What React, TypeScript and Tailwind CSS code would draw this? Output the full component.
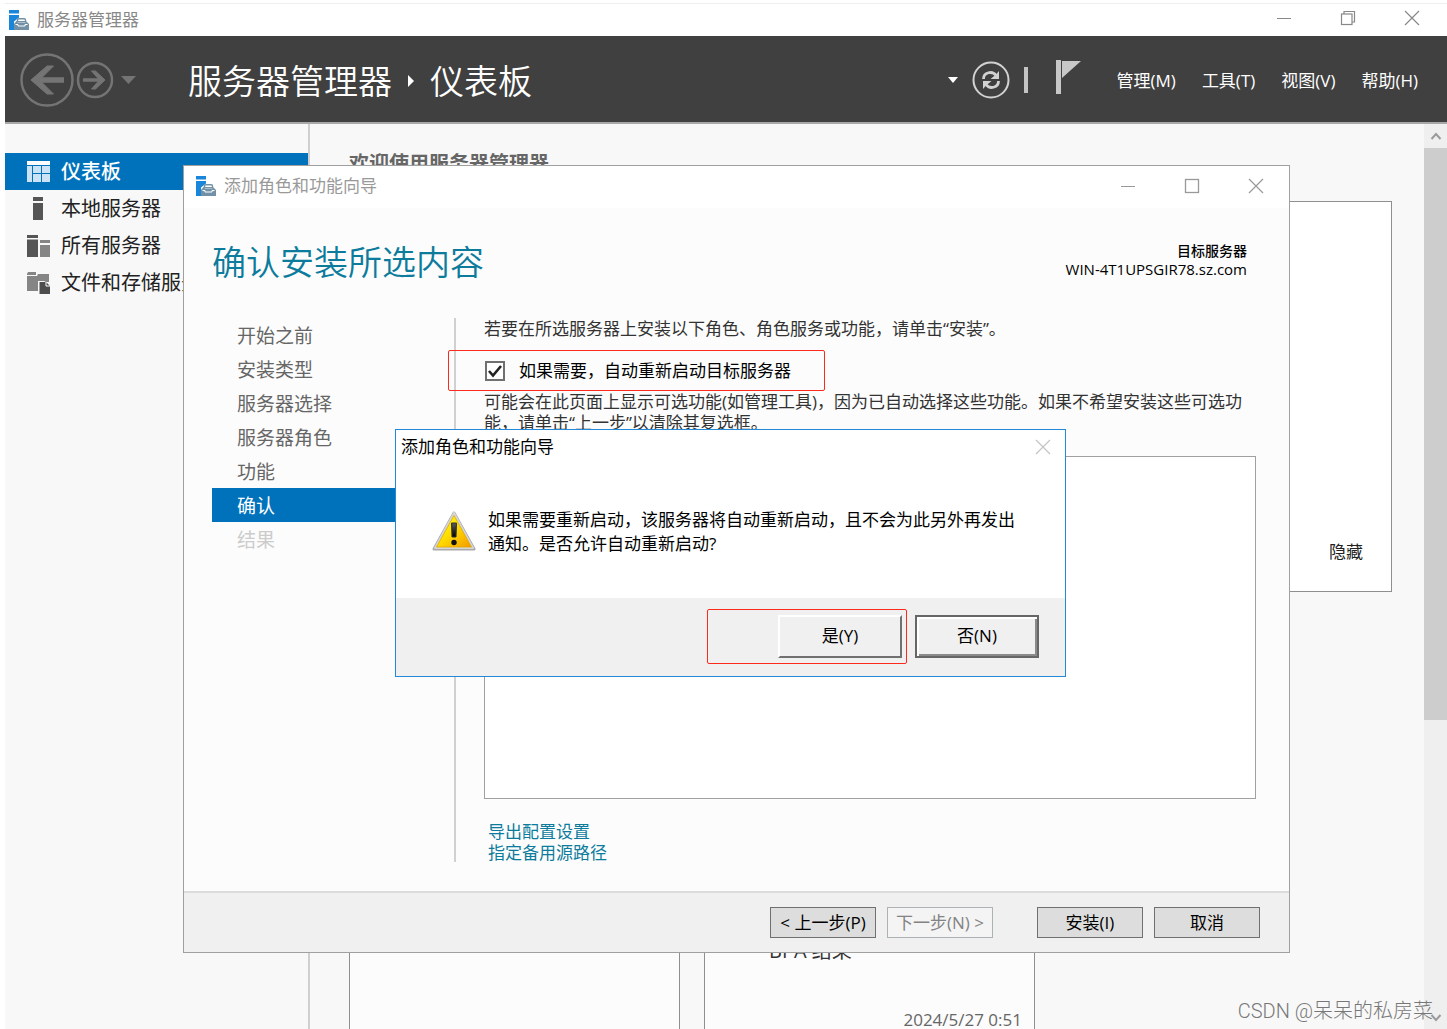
import React from 'react';

const navItems = ['仪表板', '本地服务器', '所有服务器', '文件和存储服务'];

const steps = ['开始之前', '安装类型', '服务器选择', '服务器角色', '功能', '确认', '结果'];

const menus = ['管理(M)', '工具(T)', '视图(V)', '帮助(H)'];

const AppIcon = () => (
  <svg className="h-5 w-5 shrink-0" viewBox="0 0 20 20">
    <path d="M0 0h10v3.500H0zM0 5h10v2.500L5 11.500V20H0z" fill="#1a86d9" />
    <path d="M5 20v-6l2.500-3H17l3 3v6z" fill="#7391a6" />
    <path d="M8.500 11.500V10q0-1.300 1.300-1.300h5.400q1.300 0 1.300 1.300v1.500" fill="none" stroke="#7391a6" strokeWidth="1.400" />
    <path d="M6.500 14.500h2.500v1.500h7v-1.500h2.500" stroke="#fff" strokeWidth="1" fill="none" />
    <path d="M8.500 12.500h8" stroke="#b9c8d3" strokeWidth="0.800" />
  </svg>
);

const MinimizeIcon = () => (
  <svg className="h-4 w-4" viewBox="0 0 16 16" stroke="currentColor" fill="none">
    <path d="M1 8.500h14" />
  </svg>
);

const MaximizeIcon = () => (
  <svg className="h-4 w-4" viewBox="0 0 16 16" stroke="currentColor" strokeWidth="1.300" fill="none">
    <rect x="1.500" y="1.500" width="13" height="13" />
  </svg>
);

const RestoreIcon = () => (
  <svg className="h-4 w-4" viewBox="0 0 16 16" stroke="currentColor" strokeWidth="1.200" fill="none">
    <rect x="1.500" y="4" width="10.500" height="10.500" />
    <path d="M4 4V1.500h10.500V12H12" />
  </svg>
);

const CloseIcon = () => (
  <svg className="h-4 w-4" viewBox="0 0 16 16" stroke="currentColor" strokeWidth="1.200" fill="none">
    <path d="M1 1l14 14M15 1L1 15" />
  </svg>
);

const NavIcon = ({ index }: { index: number }) => (
  <svg className="h-6 w-6 shrink-0" viewBox="0 0 24 24">
    {index === 0 && (
      <>
        <path d="M0 1h23v4H0z" fill="#fff" />
        <path d="M0 6h5v16H0zM6 6h8v7H6zM15 6h8v7h-8zM6 14h8v8H6zM15 14h8v8h-8z" fill="#cce3f5" />
      </>
    )}
    {index === 1 && <path d="M6 0h10v4H6zM6 6h10v17H6z" fill="#555" />}
    {index === 2 && (
      <>
        <path d="M0 1h11v3H0zM0 5.500h11V23H0z" fill="#555" />
        <path d="M13 6h10v3H13zM13 11h10v12H13z" fill="#858585" />
      </>
    )}
    {index === 3 && (
      <>
        <path d="M0 3l1-2h8v3H0zM0 5h10l1-2h11v8h-3l-2-1h-6v10H0z" fill="#858585" />
        <path d="M12.500 11h6.500l4 4v8H12.500z" fill="#4d4d4d" />
        <path d="M19 11v4h4" stroke="#fff" fill="none" />
      </>
    )}
  </svg>
);

const WarningIcon = () => (
  <svg className="h-[42px] w-11 shrink-0" viewBox="0 0 44 42">
    <defs>
      <linearGradient id="warnFill" x1="0" y1="0" x2="1" y2="1">
        <stop offset="0" stopColor="#ffff20" />
        <stop offset="0.45" stopColor="#ffe000" />
        <stop offset="1" stopColor="#f39a00" />
      </linearGradient>
      <linearGradient id="warnBar" x1="0" y1="0" x2="0" y2="1">
        <stop offset="0" stopColor="#5a5a5a" />
        <stop offset="1" stopColor="#000" />
      </linearGradient>
    </defs>
    <path d="M22 3L42 39H2z" fill="#a9a9a9" stroke="#a9a9a9" strokeWidth="3" strokeLinejoin="round" />
    <path d="M22 3L41 38H3z" fill="#dcdcdc" stroke="#d6d6d6" strokeWidth="2" strokeLinejoin="round" />
    <path d="M22 5.500L39.500 37h-35z" fill="url(#warnFill)" stroke="#e2a700" strokeWidth="0.800" strokeLinejoin="round" />
    <path d="M19.500 13h5l-.5 14h-4z" fill="url(#warnBar)" stroke="#333" strokeLinejoin="round" />
    <circle cx="22" cy="32.500" r="2.700" fill="#111" />
  </svg>
);

const Header = () => (
  <header className="flex h-[88px] shrink-0 items-center border-b-2 border-[#a8a8a8] bg-[#404040] pl-[15px] pr-[29px] pt-0.5 text-white">
    <button aria-label="后退">
      <svg className="h-[54px] w-[54px]" viewBox="0 0 54 54" fill="none" stroke="#747474">
        <circle cx="27" cy="27" r="25.500" strokeWidth="2.500" />
        <path d="M44 27H14" strokeWidth="5.500" />
        <path d="M27 13h6.500L19.500 27l14 14H27L11 27z" fill="#747474" strokeWidth="1" />
      </svg>
    </button>
    <button aria-label="前进">
      <svg className="ml-0.5 h-[38px] w-[38px]" viewBox="0 0 38 38" fill="none" stroke="#747474">
        <circle cx="19" cy="19" r="17" strokeWidth="2.500" />
        <path d="M7 19h20" strokeWidth="3.500" />
        <path d="M15.500 10h4l9.500 9-9.500 9h-4l8-9z" fill="#747474" strokeWidth="1" />
      </svg>
    </button>
    <svg className="ml-1.5 h-2 w-4" viewBox="0 0 16 8">
      <path d="M1 0h15L8.500 8z" fill="#747474" />
    </svg>
    <h1 className="ml-[52px] flex items-center pt-0.5 text-[34px] font-[350] leading-10">
      服务器管理器
      <svg className="mx-[15px] h-3 w-2" viewBox="0 0 8 12">
        <path d="M1 0l6 6-6 6z" fill="#fff" />
      </svg>
      仪表板
    </h1>
    <div className="ml-auto flex items-center">
      <svg className="h-1.5 w-2.5" viewBox="0 0 10 6">
        <path d="M0 0h10L5 6z" fill="#fff" />
      </svg>
      <button aria-label="刷新" className="ml-3.5">
        <svg className="h-[38px] w-[38px]" viewBox="0 0 38 38" fill="none" stroke="#d2d2d2">
          <circle cx="19" cy="19" r="17.500" strokeWidth="2" />
          <path d="M11.500 18c0-7 9-8.500 12.500-3.500M26.500 20c0 7-9 8.500-12.500 3.500" strokeWidth="2.800" />
          <path d="M27 10v8h-8.500l3-2.500 2-1.500zM11 28v-8h8.500l-3 2.500-2 1.500z" fill="#d2d2d2" stroke="none" />
        </svg>
      </button>
      <span className="ml-3.5 h-[26px] w-1 bg-[#c4c4c4]" />
      <button aria-label="通知" className="ml-7">
        <svg className="h-10 w-[26px]" viewBox="0 0 26 40" fill="#c8c8c8">
          <path d="M0 0h5v34H0zM6 1h19L6 18z" />
        </svg>
      </button>
      <nav className="ml-[35px] flex gap-[26px] pt-0.5 text-[17px]">
        {menus.map((menu) => (
          <button key={menu}>{menu}</button>
        ))}
      </nav>
    </div>
  </header>
);

const Scrollbar = () => (
  <div className="flex w-[23px] shrink-0 flex-col items-center bg-[#efefef]">
    <svg className="my-1.5 h-3 w-3" viewBox="0 0 12 12" fill="none" stroke="#9a9a9a" strokeWidth="2">
      <path d="M1.500 9L6 4l4.500 5" />
    </svg>
    <div className="h-[572px] w-full bg-[#cdcdcd]" />
    <svg className="mb-1.5 mt-auto h-3 w-3" viewBox="0 0 12 12" fill="none" stroke="#9a9a9a" strokeWidth="2">
      <path d="M1.500 4L6 9l4.500-5" />
    </svg>
  </div>
);

const Dashboard = () => (
  <main className="flex flex-1 flex-col pl-[39px] pr-8">
    <h2 className="mt-7 text-xl leading-6 font-bold text-[#666]">欢迎使用服务器管理器</h2>
    <section className="mt-[25px] flex h-[391px] shrink-0 items-end justify-end border border-[#8f8f8f] bg-white px-7 pb-[27px]">
      <button className="text-[17px] leading-6 text-[#222]">隐藏</button>
    </section>
    <div className="mt-20 flex flex-1 gap-6">
      <section className="w-[331px] border border-b-0 border-[#8f8f8f] bg-[#fcfcfc]" />
      <section className="flex w-[331px] flex-col border border-b-0 border-[#8f8f8f] bg-[#fcfcfc] pl-16 pr-3">
        <span className="mt-[266px] text-xl leading-6 text-[#333]">BPA 结果</span>
        <span className="mt-[49px] text-right text-[17px] leading-4 text-[#666]">2024/5/27 0:51</span>
      </section>
    </div>
  </main>
);

const Wizard = () => (
  <div
    role="dialog"
    aria-label="添加角色和功能向导"
    className="absolute left-[183px] right-[157px] top-[165px] flex flex-col border border-[#a0a0a0] bg-[#fcfcfc]"
  >
    <div className="flex h-[42px] items-center bg-white pb-0.5 pl-3 pr-[25px] text-[17px] text-[#999]">
      <AppIcon />
      <span className="ml-2">添加角色和功能向导</span>
      <div className="ml-auto flex gap-12">
        <button aria-label="最小化"><MinimizeIcon /></button>
        <button aria-label="最大化"><MaximizeIcon /></button>
        <button aria-label="关闭"><CloseIcon /></button>
      </div>
    </div>

    <div className="flex justify-between pl-7 pr-[42px] pt-[34px]">
      <h2 className="text-[34px] font-[350] leading-10 text-[#0d7c9c]">确认安装所选内容</h2>
      <div className="text-right text-black">
        <p className="text-sm leading-[18px] font-medium">目标服务器</p>
        <p className="text-[15px] leading-[18px]">WIN-4T1UPSGIR78.sz.com</p>
      </div>
    </div>

    <div className="mt-9 flex pl-7 pr-[33px]">
      <ul className="h-[544px] w-[244px] shrink-0 border-r-2 border-[#d0d0d0] text-[19px] leading-9 text-[#666]">
        {steps.map((step) => (
          <li
            key={step}
            className={
              step === '确认'
                ? 'h-[34px] bg-[#0072bc] pl-[25px] text-white'
                : step === '结果'
                  ? 'h-[34px] pl-[25px] text-[#ccc]'
                  : 'h-[34px] pl-[25px]'
            }
          >
            {step}
          </li>
        ))}
      </ul>
      <div className="ml-7 flex-1 text-[17px] leading-[21px] text-[#333]">
        <p>若要在所选服务器上安装以下角色、角色服务或功能，请单击“安装”。</p>
        <label className="-ml-9 mt-[11px] flex h-[41px] w-[377px] items-center rounded-xs border border-[#fb2a1c] pl-9 text-black">
          <span className="relative flex">
            <input type="checkbox" defaultChecked className="peer h-5 w-5 appearance-none border-2 border-[#707070] bg-white" />
            <svg
              className="pointer-events-none absolute left-0 top-0 hidden h-5 w-5 peer-checked:block"
              viewBox="0 0 20 20"
              fill="none"
              stroke="#222"
              strokeWidth="2.600"
            >
              <path d="M4 10l4 4.500L16 5" />
            </svg>
          </span>
          <span className="ml-3.5">如果需要，自动重新启动目标服务器</span>
        </label>
        <p className="pr-2">
          可能会在此页面上显示可选功能(如管理工具)，因为已自动选择这些功能。如果不希望安装这些可选功能，请单击“上一步”以清除其复选框。
        </p>
        <div className="mt-[23px] h-[343px] border border-[#a0a0a0] bg-white" />
        <div className="mt-[22px] flex flex-col items-start pl-1 text-[#0d7c9c]">
          <a href="#export">导出配置设置</a>
          <a href="#source">指定备用源路径</a>
        </div>
      </div>
    </div>

    <div className="mt-7 flex h-[61px] items-center justify-end gap-[11px] border-t-2 border-[#dcdcdc] bg-[#f0f0f0] pr-[29px] text-[17px] leading-6 text-black">
      <button className="h-[31px] w-[106px] border border-[#707070] bg-[#ddd] whitespace-nowrap">&lt; 上一步(P)</button>
      <button disabled className="h-[31px] w-[106px] border border-[#adb2b5] bg-[#f4f4f4] whitespace-nowrap text-[#838383]">
        下一步(N) &gt;
      </button>
      <button className="ml-[33px] h-[31px] w-[106px] border border-[#707070] bg-[#ddd]">安装(I)</button>
      <button className="h-[31px] w-[106px] border border-[#707070] bg-[#ddd]">取消</button>
    </div>
  </div>
);

const ConfirmDialog = () => (
  <div
    role="alertdialog"
    aria-label="添加角色和功能向导"
    className="absolute left-[395px] top-[429px] w-[671px] border border-[#2488d8] bg-white text-[17px] text-black"
  >
    <div className="flex h-[34px] items-center pl-[5px] pr-3.5">
      <span>添加角色和功能向导</span>
      <button aria-label="关闭" className="ml-auto text-[#c4c4c4]"><CloseIcon /></button>
    </div>
    <div className="flex h-[134px] items-start gap-3 pl-9 pr-10 pt-11">
      <div className="pt-0.5"><WarningIcon /></div>
      <p className="leading-6">如果需要重新启动，该服务器将自动重新启动，且不会为此另外再发出通知。是否允许自动重新启动?</p>
    </div>
    <div className="flex h-[78px] items-center justify-end gap-2 bg-[#f0f0f0] pb-0.5 pr-[26px]">
      <div className="rounded-xs border border-[#fb2a1c] py-[5px] pl-[70px] pr-1">
        <button className="h-[43px] w-[124px] border-2 border-b-[#707070] border-l-white border-r-[#707070] border-t-white bg-[#f0f0f0]">
          是(Y)
        </button>
      </div>
      <button className="h-[43px] w-[124px] border-2 border-[#666] bg-[#f0f0f0] shadow-[inset_2px_2px_0_#fff,inset_-2px_-2px_0_#8a8a8a]">
        否(N)
      </button>
    </div>
  </div>
);

const App = () => {
  return (
    <div className="relative flex h-screen flex-col overflow-hidden bg-white pl-[5px] pt-[3px] font-['Open_Sans','Noto_Sans_CJK_SC',sans-serif]">
      <div className="flex h-[33px] shrink-0 items-center border-t border-[#eee] pl-1 pr-[27px] text-[17px] text-[#888]">
        <AppIcon />
        <span className="ml-2">服务器管理器</span>
        <div className="ml-auto flex gap-12 pb-1">
          <button aria-label="最小化"><MinimizeIcon /></button>
          <button aria-label="还原"><RestoreIcon /></button>
          <button aria-label="关闭"><CloseIcon /></button>
        </div>
      </div>

      <Header />

      <div className="flex min-h-0 flex-1 bg-[#f8f8f8]">
        <aside className="w-[305px] shrink-0 border-r-2 border-[#cfcfcf] pt-[29px] text-xl">
          {navItems.map((item, index) => (
            <a
              key={item}
              href="#nav"
              className={
                index === 0
                  ? 'flex h-[37px] items-center bg-[#0072bc] pl-[22px] font-medium text-white'
                  : 'flex h-[37px] items-center pl-[22px] text-[#222]'
              }
            >
              <NavIcon index={index} />
              <span className="ml-2.5">{item}</span>
            </a>
          ))}
        </aside>
        <Dashboard />
        <Scrollbar />
      </div>

      <Wizard />
      <ConfirmDialog />

      <div className="absolute bottom-1 right-3.5 font-['Roboto','Noto_Sans_CJK_SC',sans-serif] text-xl font-light text-[#777]">
        CSDN @呆呆的私房菜
      </div>
    </div>
  );
};

export default App;
